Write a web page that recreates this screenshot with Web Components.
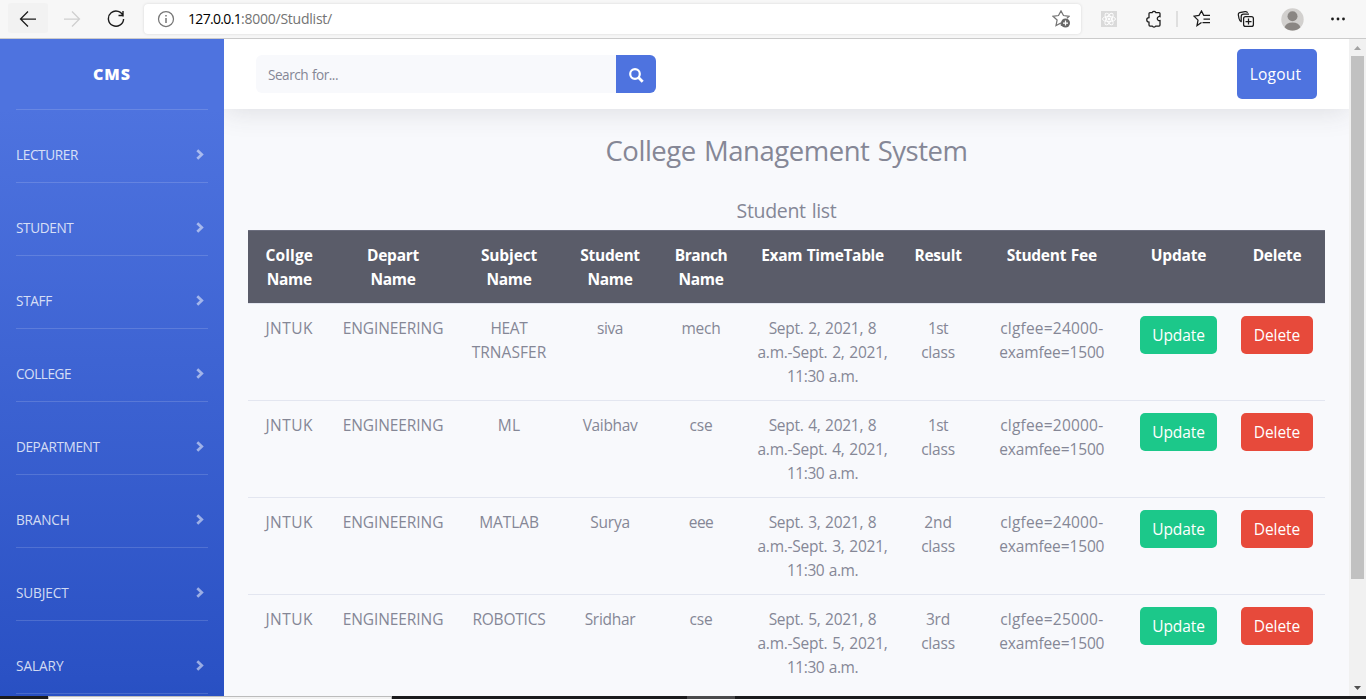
<!DOCTYPE html>
<html lang="en">
<head>
<meta charset="utf-8">
<title>College Management System</title>
<style>
html,body{margin:0;height:100%;overflow:hidden;font-family:"Open Sans","Noto Sans",sans-serif;font-size:15.5px;line-height:24px;color:#858796}
</style>
</head>
<body>
<cms-window></cms-window>
<script>
const define = (name, html, setup) => {
  const t = document.createElement('template');
  t.innerHTML = html;
  customElements.define(name, class extends HTMLElement {
    connectedCallback() {
      if (this.shadowRoot) return;
      this.attachShadow({mode: 'open'}).append(t.content.cloneNode(true));
      if (setup) setup.call(this, this.shadowRoot);
    }
  });
};

/* One line of text whose letter-spacing is adjusted to fill the width in "w". */
define('fit-text', `<style>:host{display:inline-block;white-space:pre;vertical-align:top}span{display:inline-block;word-spacing:.06em}</style><span><slot></slot></span>`, function (root) {
  const s = root.querySelector('span'), w = +this.getAttribute('w'), n = this.textContent.length;
  const natural = s.getBoundingClientRect().width;
  const ls = (w - natural) / n;
  s.style.letterSpacing = ls + 'px';
  this.style.width = w + 'px';
});

define('browser-bar', `<style>
:host{display:flex;box-sizing:border-box;height:39px;background:#f7f7f7;border-bottom:1px solid #cbcbcb;align-items:flex-start;padding:3px 0 0 8px;flex:none}
svg{display:block;flex:none;fill:none;stroke:#1b1b1b;stroke-width:1.25}
.btn{width:40px;height:30px;display:grid;place-items:center;margin-right:4px}
.back{background:#f2f2f2;border-radius:3px}
.btn svg{margin-top:1px}
.url{display:flex;align-items:center;box-sizing:border-box;width:937px;height:30px;margin:1px 0 0 4px;background:#fff;border-radius:4px;box-shadow:0 0 3px #0002;padding:0 11px 0 13px;font-size:14px;line-height:20px}
.url svg{stroke:#767676}
.a{color:#000;margin-left:13px}.b{color:#737373}.star{margin-left:auto}
.tools{display:flex;align-items:center;height:32px;margin-left:20px}
</style>
<div class="btn back"><svg width="18" height="16" viewBox="0 0 18 16"><path d="M9 .5 1.500 8 9 15.500M1.500 8H17"/></svg></div>
<div class="btn"><svg width="18" height="16" viewBox="0 0 18 16" style="stroke:#cfcfcf"><path d="M9 .5 16.500 8 9 15.500M16.500 8H1"/></svg></div>
<div class="btn"><svg width="18" height="18" viewBox="0 0 18 18" style="stroke-width:1.400"><path d="M16.300 6.500A7.600 7.600 0 1 0 16.600 9M11.500 5.500H16V1"/></svg></div>
<div class="url">
<svg width="18" height="18" viewBox="0 0 18 18"><circle cx="9" cy="9" r="7.500"/><path d="M9 8v5M9 5v1.500" stroke-width="1.500"/></svg>
<fit-text class="a" w="53">127.0.0.1</fit-text><fit-text class="b" w="91">:8000/Studlist/</fit-text>
<svg class="star" width="18" height="18" viewBox="0 0 18 18"><path d="M9.500 16 9 12.900l-5 2.700 1.100-5.600L1 6.300l5.500-.8L9 .9l2.500 4.600 5.500.8-2 2"/><circle cx="13.500" cy="13" r="4.500" fill="#666" stroke="none"/><path d="M13.500 10.500v5M11 13h5" stroke="#fff"/></svg>
</div>
<div class="tools">
<svg width="16" height="16" viewBox="0 0 16 16" style="stroke:#fff;stroke-width:.900"><path d="M0 0h16v16H0z" fill="#dadada" stroke="none"/><ellipse cx="8" cy="8" rx="6.500" ry="2.600"/><ellipse cx="8" cy="8" rx="6.500" ry="2.600" transform="rotate(60 8 8)"/><ellipse cx="8" cy="8" rx="6.500" ry="2.600" transform="rotate(120 8 8)"/><circle cx="8" cy="8" r="1" fill="#fff"/></svg>
<svg style="margin-left:28px" width="18" height="18" viewBox="0 0 18 18"><path d="M5 2.600h2.200a2 2 0 0 1 3.600 0H14q1 0 1 1V6.600a2.100 2.100 0 1 0 0 4V15q0 1-1 1H10.800a2 2 0 0 1-3.600 0H5q-1 0-1-1V12a2.200 2.200 0 0 1 0-4.500V3.600q0-1 1-1Z"/></svg>
<svg style="margin-left:13px" width="2" height="16"><path d="M1 0v16" stroke="#d0d0d0"/></svg>
<svg style="margin-left:15px" width="18" height="18" viewBox="0 0 18 18"><path d="M8.500 12.500 4 15.600l1-5.500L1 6.200l5-.8L8.500 1l2.200 4.400H17M10.500 9H17M9.500 12.500H17"/></svg>
<svg style="margin-left:26px" width="18" height="18" viewBox="0 0 18 18"><path d="M4.500 12Q2.500 11 2 8.500L1.300 4.600Q1.100 3 2.600 2.600L8 1.600q2-.4 2.600 1.200M4.200 12V6.500Q4.200 4 6.500 4H12"/><rect x="6.600" y="6.600" width="9.800" height="9.800" rx="2" fill="#f7f7f7"/><path d="M11.500 8.500v6M8.500 11.500h6"/></svg>
<svg style="margin-left:26px" width="23" height="23" viewBox="0 0 23 23"><g stroke="none"><circle cx="11.500" cy="11.500" r="11.200" fill="#d2d0ce"/><circle cx="11.500" cy="8.200" r="5" fill="#8a8683"/><path d="M3.600 19.300Q5 14.600 11.500 14.600T19.400 19.300A11.200 11.200 0 0 1 3.600 19.300Z" fill="#8a8683"/></g></svg>
<svg style="margin-left:26px" width="16" height="4" viewBox="0 0 16 4"><g fill="#1b1b1b" stroke="none"><circle cx="2.500" cy="2" r="1.400"/><circle cx="8" cy="2" r="1.400"/><circle cx="13.500" cy="2" r="1.400"/></g></svg>
</div>`);

define('nav-item', `<style>
:host{display:flex;justify-content:space-between;align-items:center;box-sizing:border-box;height:73px;margin:0 16px;padding:18px 0 0;border-bottom:1px solid #ffffff26;font-size:13.600px;line-height:20px;color:#ffffffcc}
svg{display:block;margin:-2px 4px 0 0}
</style><slot></slot><svg width="8" height="11" viewBox="0 0 8 11"><path d="M1.300 1.200 5.800 5.500 1.300 9.800" fill="none" stroke="#fff" stroke-opacity=".52" stroke-width="2.700"/></svg>`);

define('side-nav', `<style>
:host{display:block;width:224px;flex:none;background:linear-gradient(180deg,#4e73df 0,#4e73df 70px,#2a51c4 640px,#2850c2 100%);overflow:hidden}
.brand{height:70px;margin:0 16px;border-bottom:1px solid #ffffff26;display:grid;place-items:center;color:#fff;font-weight:800;font-size:16px}
</style><div class="brand"><fit-text w="38">CMS</fit-text></div><div id="items"></div>`, function (root) {
  root.getElementById('items').innerHTML = [['LECTURER',62],['STUDENT',57.5],['STAFF',36],['COLLEGE',55],['DEPARTMENT',83.5],['BRANCH',53.5],['SUBJECT',52.5],['SALARY',47.5]]
    .map(([t, w]) => `<nav-item><fit-text w="${w}">${t}</fit-text></nav-item>`).join('');
});

define('top-bar', `<style>
:host{display:flex;align-items:center;justify-content:space-between;box-sizing:border-box;height:70px;background:#fff;padding:0 32px;box-shadow:0 2px 28px 0 rgba(58,59,69,.15);position:relative}
.search{display:flex;width:400px;height:38px;border-radius:6px;overflow:hidden;background:#f8f9fc;font-size:13.600px}
.field{flex:1;padding:8px 12px 0;line-height:24px}
.go{width:40px;background:#4e73df;display:grid;place-items:center}
.out{height:50px;width:80px;border-radius:5px;background:#4e73df;color:#fff;display:grid;place-items:center;box-sizing:border-box;padding:0 3px 0 0}
</style><div class="search"><div class="field"><fit-text w="70">Search for...</fit-text></div><div class="go"><svg width="15" height="15" viewBox="0 0 15 15" style="margin-top:2px"><circle cx="6" cy="6" r="4.800" fill="none" stroke="#fff" stroke-width="2.200"/><path d="m9.500 9.500 4.200 4.200" stroke="#fff" stroke-width="2.800"/></svg></div></div>
<div class="out"><fit-text w="51.5">Logout</fit-text></div>`);

define('action-button', `<style>
:host{display:grid;place-items:center;height:38px;border-radius:5px;color:#fff;background:#1cc88a}
:host([kind=delete]){background:#e74a3b}
</style><slot></slot>`);

define('student-table', `<style>
:host{display:block;width:1077px}
.row{display:grid;grid-template-columns:82.500px 125px 107px 95px 87px 156px 75px 152.500px 101px 96px;box-sizing:border-box;height:97px;border-top:1px solid #e3e6f0}
.head{height:73px;background:#5a5c69;border-top-color:#6c6e7e;color:#fff;font-weight:700}
.cell{padding:12px 12px 0}
.txt{display:flex;flex-direction:column;align-items:center;padding:12px 0 0}
</style><div id="rows"></div>`, function (root) {
  const cell = lines => `<div class="cell txt">${lines.map(([t, w]) => `<fit-text w="${w - .8}">${t}</fit-text>`).join('')}</div>`;
  const N = ['Name', 46];
  const head = [[['Collge',48.5],N],[['Depart',53],N],[['Subject',57],N],[['Student',60.5],N],[['Branch',53.5],N],[['Exam TimeTable',123.5]],[['Result',48]],[['Student Fee',91]],[['Update',56.5]],[['Delete',49.5]]];
  const data = [
    [[['HEAT',38],['TRNASFER',75.5]],['siva',27],['mech',40],2,[['1st',21]],24],
    [[['ML',23.5]],['Vaibhav',55.5],['cse',24],4,[['1st',21]],20],
    [[['MATLAB',60.5]],['Surya',40.5],['eee',25.5],3,[['2nd',28.5]],24],
    [[['ROBOTICS',74]],['Sridhar',51.5],['cse',24],5,[['3rd',25]],25]];
  root.getElementById('rows').innerHTML = `<div class="row head">${head.map(cell).join('')}</div>` + data.map(([sub, name, br, d, res, fee]) =>
    `<div class="row">${[[['JNTUK',48.5]],[['ENGINEERING',101.5]],sub,[name],[br],
      [[`Sept. ${d}, 2021, 8`,108.5],[`a.m.-Sept. ${d}, 2021,`,131],['11:30 a.m.',72]],
      [...res,['class',34.5]],[[`clgfee=${fee}000-`,104],['examfee=1500',106]]].map(cell).join('')}
    <div class="cell"><action-button><fit-text w="52.500">Update</fit-text></action-button></div>
    <div class="cell"><action-button kind="delete"><fit-text w="46.500">Delete</fit-text></action-button></div></div>`).join('');
});

define('scroll-bar', `<style>
:host{display:flex;flex-direction:column;align-items:center;justify-content:space-between;width:17px;flex:none;background:#f1f1f1;position:relative;z-index:1}
.up{height:17px;display:grid;place-items:center}
.thumb{width:13px;height:523px;background:#c1c1c1;margin-bottom:auto}
svg{display:block}
</style><div class="up"><svg width="7" height="4"><path d="M0 4 3.500 0 7 4z" fill="#a3a3a3"/></svg></div><div class="thumb"></div><div class="up"><svg width="7" height="4"><path d="M0 0h7L3.500 4z" fill="#505050"/></svg></div>`);

define('task-strip', `<style>
:host{display:flex;height:3px;flex:none;background:#1b1b1d}
.w{box-sizing:border-box;margin-left:48px;width:344px;background:#f3f3f3;border:1px solid #bcbcbc;border-bottom:0}
.g{margin-left:295px;width:48px;background:#4a4a4c}
</style><div class="w"></div><div class="g"></div>`);

define('cms-window', `<style>
:host{display:flex;flex-direction:column;width:1366px;height:699px;overflow:hidden}
.page{display:flex;flex:1;min-height:0;background:#f8f9fc}
main{flex:1;min-width:0;overflow:hidden}
.content{padding:0 24px}
.titles{width:1077px;display:flex;flex-direction:column;align-items:center}
.h{font-size:27.500px;line-height:34px;margin-top:25px}
.s{font-size:19.500px;line-height:24px;margin:31px 0 7px}
</style>
<browser-bar></browser-bar>
<div class="page"><side-nav></side-nav><main><top-bar></top-bar><div class="content"><div class="titles"><div class="h"><fit-text w="362">College Management System</fit-text></div><div class="s"><fit-text w="100">Student list</fit-text></div></div><student-table></student-table></div></main><scroll-bar></scroll-bar></div>
<task-strip></task-strip>`);
</script>
</body>
</html>
